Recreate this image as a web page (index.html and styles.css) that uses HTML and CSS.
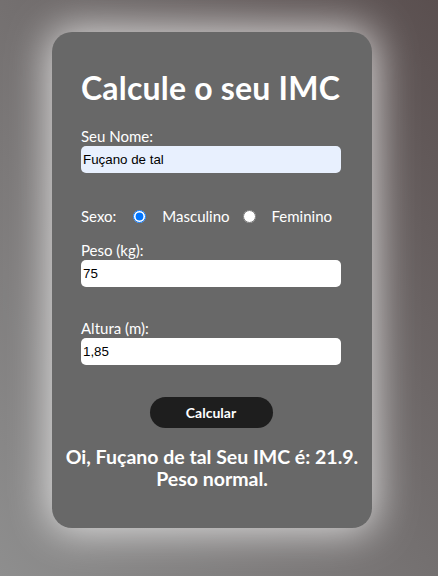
FILE: index.html
```html
<!DOCTYPE html>
<html lang="pt">
<head>
<meta charset="utf-8">
<title>Calcule o seu IMC</title>
<link rel="stylesheet" href="styles.css">
</head>
<body>
  <main class="card">
    <h1 class="title">Calcule o seu IMC</h1>
    <form class="form">
      <div class="field">
        <label class="label" for="nome">Seu Nome:</label>
        <input class="input input-filled" id="nome" type="text" value="Fuçano de tal">
      </div>
      <div class="sexo">
        <span class="sexo-label">Sexo:</span>
        <input class="radio" type="radio" name="sexo" id="masc" checked>
        <label class="radio-label" for="masc">Masculino</label>
        <input class="radio radio-second" type="radio" name="sexo" id="fem">
        <label class="radio-label" for="fem">Feminino</label>
      </div>
      <div class="field field-peso">
        <label class="label" for="peso">Peso (kg):</label>
        <input class="input" id="peso" type="text" value="75">
      </div>
      <div class="field field-altura">
        <label class="label" for="altura">Altura (m):</label>
        <input class="input" id="altura" type="text" value="1,85">
      </div>
      <div class="actions">
        <button class="button" type="button">Calcular</button>
      </div>
    </form>
    <p class="result">Oi, Fuçano de tal Seu IMC é: 21.9.<br>Peso normal.</p>
  </main>
</body>
</html>
```
FILE: styles.css
```css
html, body {
  margin: 0;
  height: 100%;
}
body {
  background: linear-gradient(to top right, #8e8e8e 0%, #747070 50%, #5a4f4f 100%);
  font-family: "Gill Sans", "Lato", "DejaVu Sans", sans-serif;
  color: #fff;
  padding: 32px 0 0 52px;
  box-sizing: border-box;
  overflow: hidden;
}
.card {
  width: 320px;
  height: 496px;
  box-sizing: border-box;
  background: #686868;
  border-radius: 20px;
  padding: 37px 14px 0;
  box-shadow: 0 0 40px 4px rgba(255, 255, 255, 0.75);
}
.title {
  margin: 0 0 0 15px;
  font-size: 32px;
  line-height: 38px;
  font-weight: 700;
  letter-spacing: 0.2px;
}
.form {
  margin: 20px 17px 0 15px;
}
.field {
  display: flex;
  flex-direction: column;
}
.label {
  font-size: 15px;
  line-height: 19px;
}
.input {
  height: 27px;
  box-sizing: border-box;
  margin: 0;
  border: none;
  border-radius: 5px;
  padding: 1px 2px;
  background: #fff;
  font-family: Arial, "Liberation Sans", sans-serif;
  font-size: 13.33px;
  color: #000;
}
.input-filled {
  background: #e8f0fe;
}
.sexo {
  display: flex;
  align-items: center;
  margin-top: 34px;
  height: 18px;
  font-size: 15px;
}
.radio {
  margin: 0 16px 0 17px;
  width: 13px;
  height: 13px;
}
.radio-second {
  margin-left: 13px;
}
.radio-label {
  line-height: 18px;
}
.field-peso {
  margin-top: 16px;
}
.field-altura {
  margin-top: 32px;
}
.actions {
  display: flex;
  justify-content: center;
  margin-top: 32px;
}
.button {
  width: 123px;
  height: 31px;
  border: none;
  border-radius: 16px;
  background: #1e1e1e;
  color: #fff;
  font-family: "Gill Sans", "Lato", sans-serif;
  font-weight: 700;
  font-size: 14px;
}
.result {
  margin: 18px -10px 0;
  text-align: center;
  font-size: 19.5px;
  line-height: 22px;
  font-weight: 700;
}
```
